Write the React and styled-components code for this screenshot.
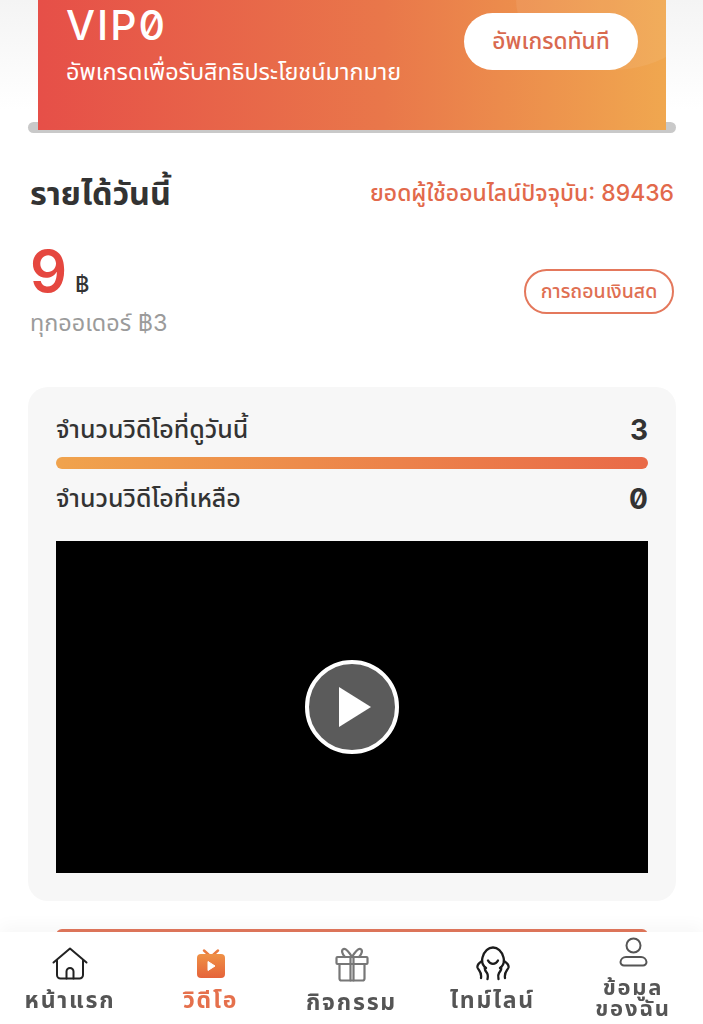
import React from "react";
import styled, { createGlobalStyle } from "styled-components";

const GlobalStyle = createGlobalStyle`
  html, body {
    margin: 0;
    padding: 0;
    height: 100%;
    overflow: hidden;
    background: #fff;
    font-family: "Inter", "Noto Sans", "Noto Sans Thai", "Liberation Sans", sans-serif;
  }
  * { box-sizing: border-box; }
`;

const HomeIcon = () => (
  <svg width="36" height="34" viewBox="0 0 36 34" fill="none" stroke="#222" strokeWidth="2" strokeLinejoin="round" strokeLinecap="round">
    <path d="M1.5 15.5 18 1.5l16.5 14" />
    <path d="M5 13.5V28a3.5 3.5 0 0 0 3.5 3.5h19A3.5 3.5 0 0 0 31 28V13.5" />
    <path d="M14.5 31.5v-7a3.5 3.5 0 0 1 7 0v7" />
  </svg>
);

const TvIcon = () => (
  <svg width="30" height="30" viewBox="0 0 30 30">
    <defs>
      <linearGradient id="tvFill" x1="0" y1="0" x2="0" y2="1">
        <stop offset="0" stopColor="#ef9146" />
        <stop offset="1" stopColor="#e5633a" />
      </linearGradient>
    </defs>
    <path d="M8 1.5l5 4.5M22 1.5l-5 4.5" stroke="#ea7a40" strokeWidth="2.4" strokeLinecap="round" />
    <rect x="1" y="5" width="28" height="24" rx="4" fill="url(#tvFill)" />
    <path d="M12 12.5l7 4.5-7 4.5z" fill="#fff" strokeLinejoin="round" stroke="#fff" />
  </svg>
);

const GiftIcon = () => (
  <svg width="34" height="36" viewBox="0 0 34 36" fill="none" stroke="#777" strokeWidth="2.2" strokeLinejoin="round" strokeLinecap="round">
    <rect x="1.500" y="11" width="31" height="7" rx="1" />
    <path d="M4.500 18v14.500a2 2 0 0 0 2 2h21a2 2 0 0 0 2-2V18" />
    <path d="M15.500 11v23.500M18.500 11v23.500" />
    <path d="M17 11C14 6 11 2 8.500 3 6 4 7 8 10 11M17 11C20 6 23 2 25.500 3 28 4 27 8 24 11" />
  </svg>
);

const TimelineIcon = () => (
  <svg width="34" height="36" viewBox="0 0 34 36" fill="none" stroke="#1c1c1c" strokeWidth="2.3" strokeLinecap="round" strokeLinejoin="round">
    <path d="M10 22C6.500 19.500 5.500 15.500 6.500 11.500 8 5 12.500 1.500 17 1.500s9 3.500 10.500 10c1 4 0 8-3.500 10.500" />
    <path d="M12 14.500c2.500 4.500 7.500 4.500 10 0" />
    <path d="M6 15C3 17 1 19.500 1.500 21.500 2.500 24.500 6 25.500 5 32" />
    <path d="M9 21.500c-1 2 .5 3.500 2 5.500 1 1.500 1 3.500.5 6" />
    <path d="M28 15c3 2 5 4.500 4.500 6.500-1 3-4.500 4-3.500 10.500" />
    <path d="M25 21.500c1 2-.5 3.500-2 5.500-1 1.500-1 3.500-.5 6" />
  </svg>
);

const UserIcon = () => (
  <svg width="29" height="30" viewBox="0 0 29 30" fill="none" stroke="#555" strokeWidth="2" strokeLinejoin="round">
    <circle cx="14.500" cy="8.500" r="7" />
    <path d="M7 20h15a5.500 5.500 0 0 1 5.500 5v0a3.500 3.500 0 0 1-3.500 3.500H5A3.500 3.500 0 0 1 1.500 25v0A5.500 5.500 0 0 1 7 20z" />
  </svg>
);

const navItems = [
  { label: "หน้าแรก", icon: <HomeIcon /> },
  { label: "วิดีโอ", icon: <TvIcon />, active: true },
  { label: "กิจกรรม", icon: <GiftIcon />, low: true },
  { label: "ไทม์ไลน์", icon: <TimelineIcon /> },
  { label: "ข้อมูล ของฉัน", icon: <UserIcon />, raised: true },
];

export default function App() {
  return (
    <Page>
      <GlobalStyle />

      <BannerWrap>
        <Banner>
          <BannerGlow />
          <div>
            <VipTitle>VIP0</VipTitle>
            <VipText>อัพเกรดเพื่อรับสิทธิประโยชน์มากมาย</VipText>
          </div>
          <UpgradeButton>อัพเกรดทันที</UpgradeButton>
        </Banner>
        <BannerShelf />
      </BannerWrap>

      <Content>
        <HeadRow>
          <Heading>รายได้วันนี้</Heading>
          <OnlineCount>ยอดผู้ใช้ออนไลน์ปัจจุบัน: 89436</OnlineCount>
        </HeadRow>

        <IncomeRow>
          <div>
            <Amount>
              <AmountValue>9</AmountValue>
              <AmountUnit>฿</AmountUnit>
            </Amount>
            <PerOrder>ทุกออเดอร์ ฿3</PerOrder>
          </div>
          <WithdrawButton>การถอนเงินสด</WithdrawButton>
        </IncomeRow>

        <Card>
          <StatRow>
            <StatLabel>จำนวนวิดีโอที่ดูวันนี้</StatLabel>
            <StatValue>3</StatValue>
          </StatRow>
          <ProgressBar />
          <StatRow>
            <StatLabel>จำนวนวิดีโอที่เหลือ</StatLabel>
            <StatValue>0</StatValue>
          </StatRow>
          <Player>
            <PlayButton>
              <svg width="34" height="40" viewBox="0 0 34 40">
                <path d="M1 0l32 20L1 40z" fill="#fff" />
              </svg>
            </PlayButton>
          </Player>
        </Card>

        <StartButton />
      </Content>

      <BottomNav>
        {navItems.map((item) => (
          <NavItem key={item.label} $raised={item.raised}>
            <NavIcon>{item.icon}</NavIcon>
            <NavLabel $active={item.active} $low={item.low} $raised={item.raised}>
              {item.label}
            </NavLabel>
          </NavItem>
        ))}
      </BottomNav>
    </Page>
  );
}

const Page = styled.div`
  width: 703px;
  height: 1024px;
  overflow: hidden;
  background: linear-gradient(#f4f4f4 0, #fff 110px);
`;

const BannerWrap = styled.div`
  padding: 0 27px 0 28px;
`;

const Banner = styled.div`
  position: relative;
  overflow: hidden;
  height: 130px;
  margin: 0 10px;
  padding: 0 28px;
  display: flex;
  align-items: flex-start;
  justify-content: space-between;
  color: #fff;
  background: linear-gradient(90deg, #e64f48 0%, #e9774a 55%, #f0a74f 100%);
`;

const BannerGlow = styled.div`
  position: absolute;
  right: -40px;
  top: -70px;
  width: 190px;
  height: 140px;
  border-radius: 50%;
  background: rgba(255, 255, 255, 0.07);
`;

const BannerShelf = styled.div`
  height: 11px;
  margin-top: -8px;
  border-radius: 6px;
  background: #c9c9c9;
`;

const VipTitle = styled.div`
  font-size: 41px;
  font-weight: 500;
  line-height: 50px;
  letter-spacing: 2px;
  font-feature-settings: "zero";
`;

const VipText = styled.div`
  margin-top: 6px;
  font-size: 23.4px;
  line-height: 32px;
  white-space: nowrap;
  position: relative;
`;

const UpgradeButton = styled.div`
  position: relative;
  margin-top: 13px;
  flex: none;
  width: 174px;
  height: 57px;
  border-radius: 29px;
  background: #fff;
  color: #d9694f;
  display: flex;
  align-items: center;
  justify-content: center;
  font-size: 22.7px;
  font-weight: 500;
`;

const Content = styled.div`
  padding: 0 27px 0 28px;
`;

const HeadRow = styled.div`
  display: flex;
  align-items: center;
  justify-content: space-between;
  padding: 40px 2px 0;
`;

const Heading = styled.div`
  font-size: 32.4px;
  font-weight: 700;
  line-height: 42px;
  color: #333;
`;

const OnlineCount = styled.div`
  font-size: 22.9px;
  font-weight: 500;
  color: #e2694b;
`;

const IncomeRow = styled.div`
  display: flex;
  align-items: center;
  justify-content: space-between;
  padding: 25px 2px 0;
`;

const Amount = styled.div`
  display: flex;
  align-items: baseline;
  gap: 8px;
`;

const AmountValue = styled.span`
  font-size: 58px;
  font-weight: 600;
  line-height: 62px;
  color: #e5473f;
`;

const AmountUnit = styled.span`
  font-size: 22px;
  font-weight: 500;
  color: #333;
`;

const PerOrder = styled.div`
  margin-top: 6px;
  font-size: 23.4px;
  line-height: 30px;
  color: #9b9b9b;
`;

const WithdrawButton = styled.div`
  width: 150px;
  height: 45px;
  margin-top: 5px;
  border: 2px solid #e4785c;
  border-radius: 23px;
  color: #df6f52;
  display: flex;
  align-items: center;
  justify-content: center;
  font-size: 19.5px;
  font-weight: 500;
`;

const Card = styled.div`
  margin-top: 49px;
  padding: 21px 28px 28px;
  border-radius: 20px;
  background: #f7f7f7;
`;

const StatRow = styled.div`
  height: 44px;
  display: flex;
  align-items: center;
  justify-content: space-between;
`;

const StatLabel = styled.div`
  font-size: 25px;
  font-weight: 500;
  color: #333;
`;

const StatValue = styled.div`
  font-size: 28px;
  font-weight: 700;
  color: #333;
  font-feature-settings: "zero";
`;

const ProgressBar = styled.div`
  height: 12px;
  margin: 5px 0 8px;
  border-radius: 6px;
  background: linear-gradient(90deg, #f0a34d, #e96a48);
`;

const Player = styled.div`
  height: 332px;
  margin-top: 20px;
  background: #000;
  display: flex;
  align-items: center;
  justify-content: center;
`;

const PlayButton = styled.div`
  width: 94px;
  height: 94px;
  padding-left: 6px;
  border: 4px solid #fff;
  border-radius: 50%;
  background: #5b5b5b;
  display: flex;
  align-items: center;
  justify-content: center;
`;

const StartButton = styled.div`
  height: 60px;
  margin: 28px 28px 0;
  border-radius: 6px;
  background: #e2775c;
`;

const BottomNav = styled.nav`
  position: fixed;
  left: 0;
  bottom: 0;
  width: 703px;
  height: 92px;
  display: grid;
  grid-template-columns: 140px 141px 141px 141px 140px;
  background: #fff;
  box-shadow: 0 -6px 16px rgba(0, 0, 0, 0.035);
`;

const NavItem = styled.div`
  display: flex;
  flex-direction: column;
  align-items: center;
  padding-top: ${(p) => (p.$raised ? "2px" : "14px")};
`;

const NavIcon = styled.div`
  height: 36px;
  display: flex;
  align-items: center;
  justify-content: center;
`;

const NavLabel = styled.div`
  max-width: 100px;
  margin-top: ${(p) => (p.$low ? "9px" : "7px")};
  text-align: center;
  font-size: ${(p) => (p.$raised ? "22px" : "23px")};
  font-weight: 700;
  line-height: ${(p) => (p.$raised ? "21px" : "22px")};
  letter-spacing: 1.8px;
  color: ${(p) => (p.$active ? "#e5704c" : "#555")};
`;
